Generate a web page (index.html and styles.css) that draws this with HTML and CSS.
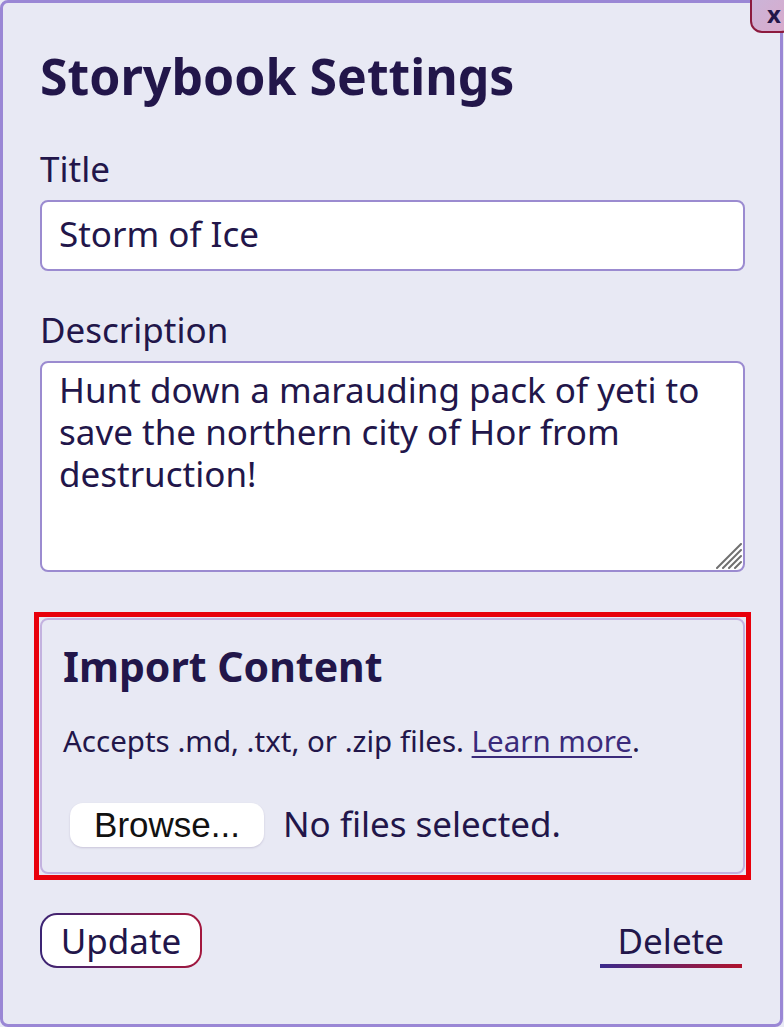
FILE: index.html
```html
<!DOCTYPE html>
<html lang="en">
<head>
<meta charset="utf-8">
<title>Storybook Settings</title>
<link rel="stylesheet" href="styles.css">
</head>
<body>
<div class="modal">
  <button class="close" type="button">x</button>
  <h1 class="heading">Storybook Settings</h1>
  <label class="label" for="title">Title</label>
  <input class="field" id="title" type="text" value="Storm of Ice">
  <label class="label label-desc" for="desc">Description</label>
  <div class="area-wrap">
    <textarea class="area" id="desc">Hunt down a marauding pack of yeti to save the northern city of Hor from destruction!</textarea>
    <svg class="grip" width="26" height="26" viewBox="0 0 26 26" aria-hidden="true">
      <path d="M1 25 L25 1 M7 25 L25 7 M13 25 L25 13 M19 25 L25 19" stroke="#707070" stroke-width="2" stroke-linecap="round" fill="none"/>
    </svg>
  </div>
  <div class="highlight">
    <section class="import">
      <h2 class="import-title">Import Content</h2>
      <p class="import-note">Accepts .md, .txt, or .zip files. <a class="learn" href="#">Learn more</a>.</p>
      <div class="file-row">
        <span class="browse">Browse...</span>
        <span class="nofile">No files selected.</span>
      </div>
    </section>
  </div>
  <div class="footer">
    <button class="update" type="button">Update</button>
    <button class="delete" type="button">Delete</button>
  </div>
</div>
</body>
</html>
```
FILE: styles.css
```css
html, body {
  margin: 0;
  padding: 0;
  overflow: hidden;
  background: #e8e9f4;
}
body {
  font-family: "Noto Sans", "Open Sans", sans-serif;
  color: #22164a;
}
.modal {
  position: relative;
  box-sizing: border-box;
  width: 783px;
  height: 1027px;
  border: 3px solid #9a87d5;
  border-radius: 8px;
  background: #e8e9f4;
  padding: 43px 35px 0 37px;
  display: flex;
  flex-direction: column;
  align-items: flex-start;
}
.close {
  position: absolute;
  top: -17px;
  right: -13px;
  width: 43px;
  height: 47px;
  box-sizing: border-box;
  border: 2px solid #8c1a3e;
  border-radius: 12px;
  background: linear-gradient(135deg, #c9b6da 0%, #d9aacb 100%);
  color: #22164a;
  font-family: "Noto Sans", sans-serif;
  font-weight: 700;
  font-size: 24px;
  line-height: 1;
  padding: 9px 0 0 5px;
  text-align: center;
}
.heading {
  margin: 0 0 42px 0;
  font-size: 50px;
  line-height: 60px;
  font-weight: 700;
  color: #22164a;
}
.label {
  display: block;
  font-size: 35px;
  line-height: 42px;
  margin: 0 0 10px 0;
}
.field {
  box-sizing: border-box;
  width: 705px;
  height: 71px;
  margin: 0 0 38px 0;
  border: 2px solid #9b8bd0;
  border-radius: 8px;
  background: #fff;
  padding: 0 18px 4px 17px;
  font-family: "Noto Sans", sans-serif;
  font-size: 35px;
  color: #22164a;
  outline: none;
}
.area-wrap {
  position: relative;
  width: 705px;
  height: 211px;
  margin: 0 0 40px 0;
}
.area {
  display: block;
  box-sizing: border-box;
  width: 100%;
  height: 100%;
  margin: 0;
  border: 2px solid #9b8bd0;
  border-radius: 8px;
  background: #fff;
  padding: 6px 18px 0 17px;
  font-family: "Noto Sans", sans-serif;
  font-size: 35px;
  line-height: 42px;
  color: #22164a;
  outline: none;
  resize: none;
}
.grip {
  position: absolute;
  right: 3px;
  bottom: 3px;
}
.highlight {
  margin-left: -6px;
  border: 5px solid #e8000b;
  padding: 1px;
}
.import {
  box-sizing: border-box;
  width: 705px;
  border: 2px solid #c3b2df;
  border-radius: 8px;
  padding: 21px 20px 25px 21px;
  background: #e8e9f4;
}
.import-title {
  margin: 0 0 32px 0;
  font-size: 41px;
  line-height: 50px;
  font-weight: 700;
}
.import-note {
  margin: 0 0 43px 0;
  font-size: 29.5px;
  line-height: 36px;
}
.learn {
  color: #3a2a7a;
  text-decoration: underline;
  text-decoration-thickness: 2px;
  text-underline-offset: 4px;
}
.file-row {
  display: flex;
  align-items: baseline;
  gap: 19px;
}
.browse {
  margin-left: 7px;
  box-sizing: border-box;
  width: 194px;
  height: 44px;
  border-radius: 13px;
  background: #fff;
  box-shadow: 0 1px 2px rgba(60, 40, 100, 0.18);
  font-family: "Liberation Sans", Arial, sans-serif;
  font-size: 35px;
  line-height: 44px;
  color: #111;
  text-align: center;
}
.nofile {
  font-size: 35px;
  line-height: 44px;
}
.footer {
  align-self: stretch;
  display: flex;
  justify-content: space-between;
  align-items: baseline;
  margin: 33px 3px 0 0;
}
.update {
  box-sizing: border-box;
  width: 162px;
  height: 55px;
  border: 2px solid transparent;
  border-radius: 17px;
  background: linear-gradient(#fff, #fff) padding-box,
              linear-gradient(90deg, #3b2474, #a3173d) border-box;
  padding: 0;
  font-family: "Noto Sans", sans-serif;
  font-size: 35px;
  line-height: 51px;
  color: #22164a;
  text-align: center;
}
.delete {
  border: 0;
  padding: 0 18px 6px 18px;
  background: linear-gradient(90deg, #3a2a8c, #b0122c) left bottom / 100% 4px no-repeat;
  font-family: "Noto Sans", sans-serif;
  font-size: 35px;
  line-height: 42px;
  color: #22164a;
}
```
